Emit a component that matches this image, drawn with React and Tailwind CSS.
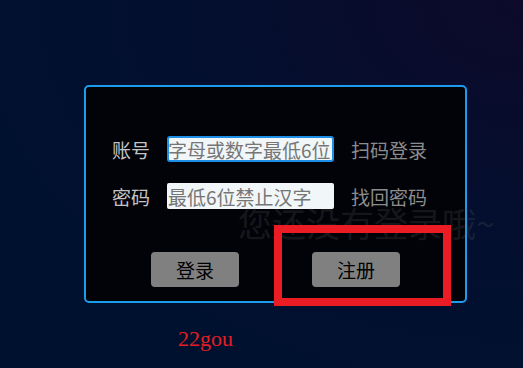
import React from 'react';

const cjk = { fontFamily: '"Noto Sans CJK SC", "Noto Sans", sans-serif' };

const LoginPage = () => {
  return (
    <div
      className="relative w-full h-[368px] overflow-hidden bg-[radial-gradient(ellipse_at_100%_0%,#0d0a2a_0%,#040e2e_40%,#00112f_75%)]"
      style={cjk}
    >
      <div className="pt-[85px] pl-[84px]">
        {/* Panel */}
        <div className="w-[383px] h-[218px] rounded-[5px] border-2 border-[#1c9cec] bg-[#020308] pt-[49px]">
          <div className="flex items-center h-[26px] pl-[26px]">
            <span className="w-[38px] text-[19px] leading-none text-[#c4c4c4]">账号</span>
            <div className="ml-[17px] w-[167px] h-[26px] rounded-[3px] border-2 border-[#1e8fe6] bg-[#f1f6f9] flex items-center overflow-hidden">
              <span className="text-[19px] leading-none text-[#767676] whitespace-nowrap -ml-px">字母或数字最低6位</span>
            </div>
            <span className="ml-[17px] text-[19px] leading-none text-[#8c8c8c]">扫码登录</span>
          </div>
          <div className="flex items-center h-[26px] mt-[21px] pl-[26px]">
            <span className="w-[38px] text-[19px] leading-none text-[#c4c4c4]">密码</span>
            <div className="ml-[17px] w-[167px] h-[26px] rounded-[2px] bg-[#f1f6f9] flex items-center overflow-hidden">
              <span className="text-[19px] leading-none text-[#767676] whitespace-nowrap ml-px">最低6位禁止汉字</span>
            </div>
            <span className="ml-[17px] text-[19px] leading-none text-[#8c8c8c]">找回密码</span>
          </div>
          <div className="flex mt-[43px] pl-[65px] gap-[73px]">
            <button className="w-[88px] h-[35px] rounded-[4px] bg-[#808080] text-[19px] leading-none text-black">登录</button>
            <button className="w-[88px] h-[35px] rounded-[4px] bg-[#808080] text-[19px] leading-none text-black">注册</button>
          </div>
        </div>

        <div
          className="mt-[25px] ml-[94px] text-[22px] leading-none text-[#e31e24]"
          style={{ fontFamily: '"Liberation Serif", serif' }}
        >
          22gou
        </div>
      </div>

      {/* Tip overlay */}
      <div className="absolute left-[238px] top-[206px] text-[34px] leading-none whitespace-nowrap text-[rgba(128,128,128,0.18)]">
        您还没有登录哦~
      </div>

      {/* Highlight box */}
      <div className="absolute left-[274px] top-[225px] w-[177px] h-[81px] border-[8.5px] border-[#ec1c24]" />
    </div>
  );
};

export default function App() {
  return <LoginPage />;
}
